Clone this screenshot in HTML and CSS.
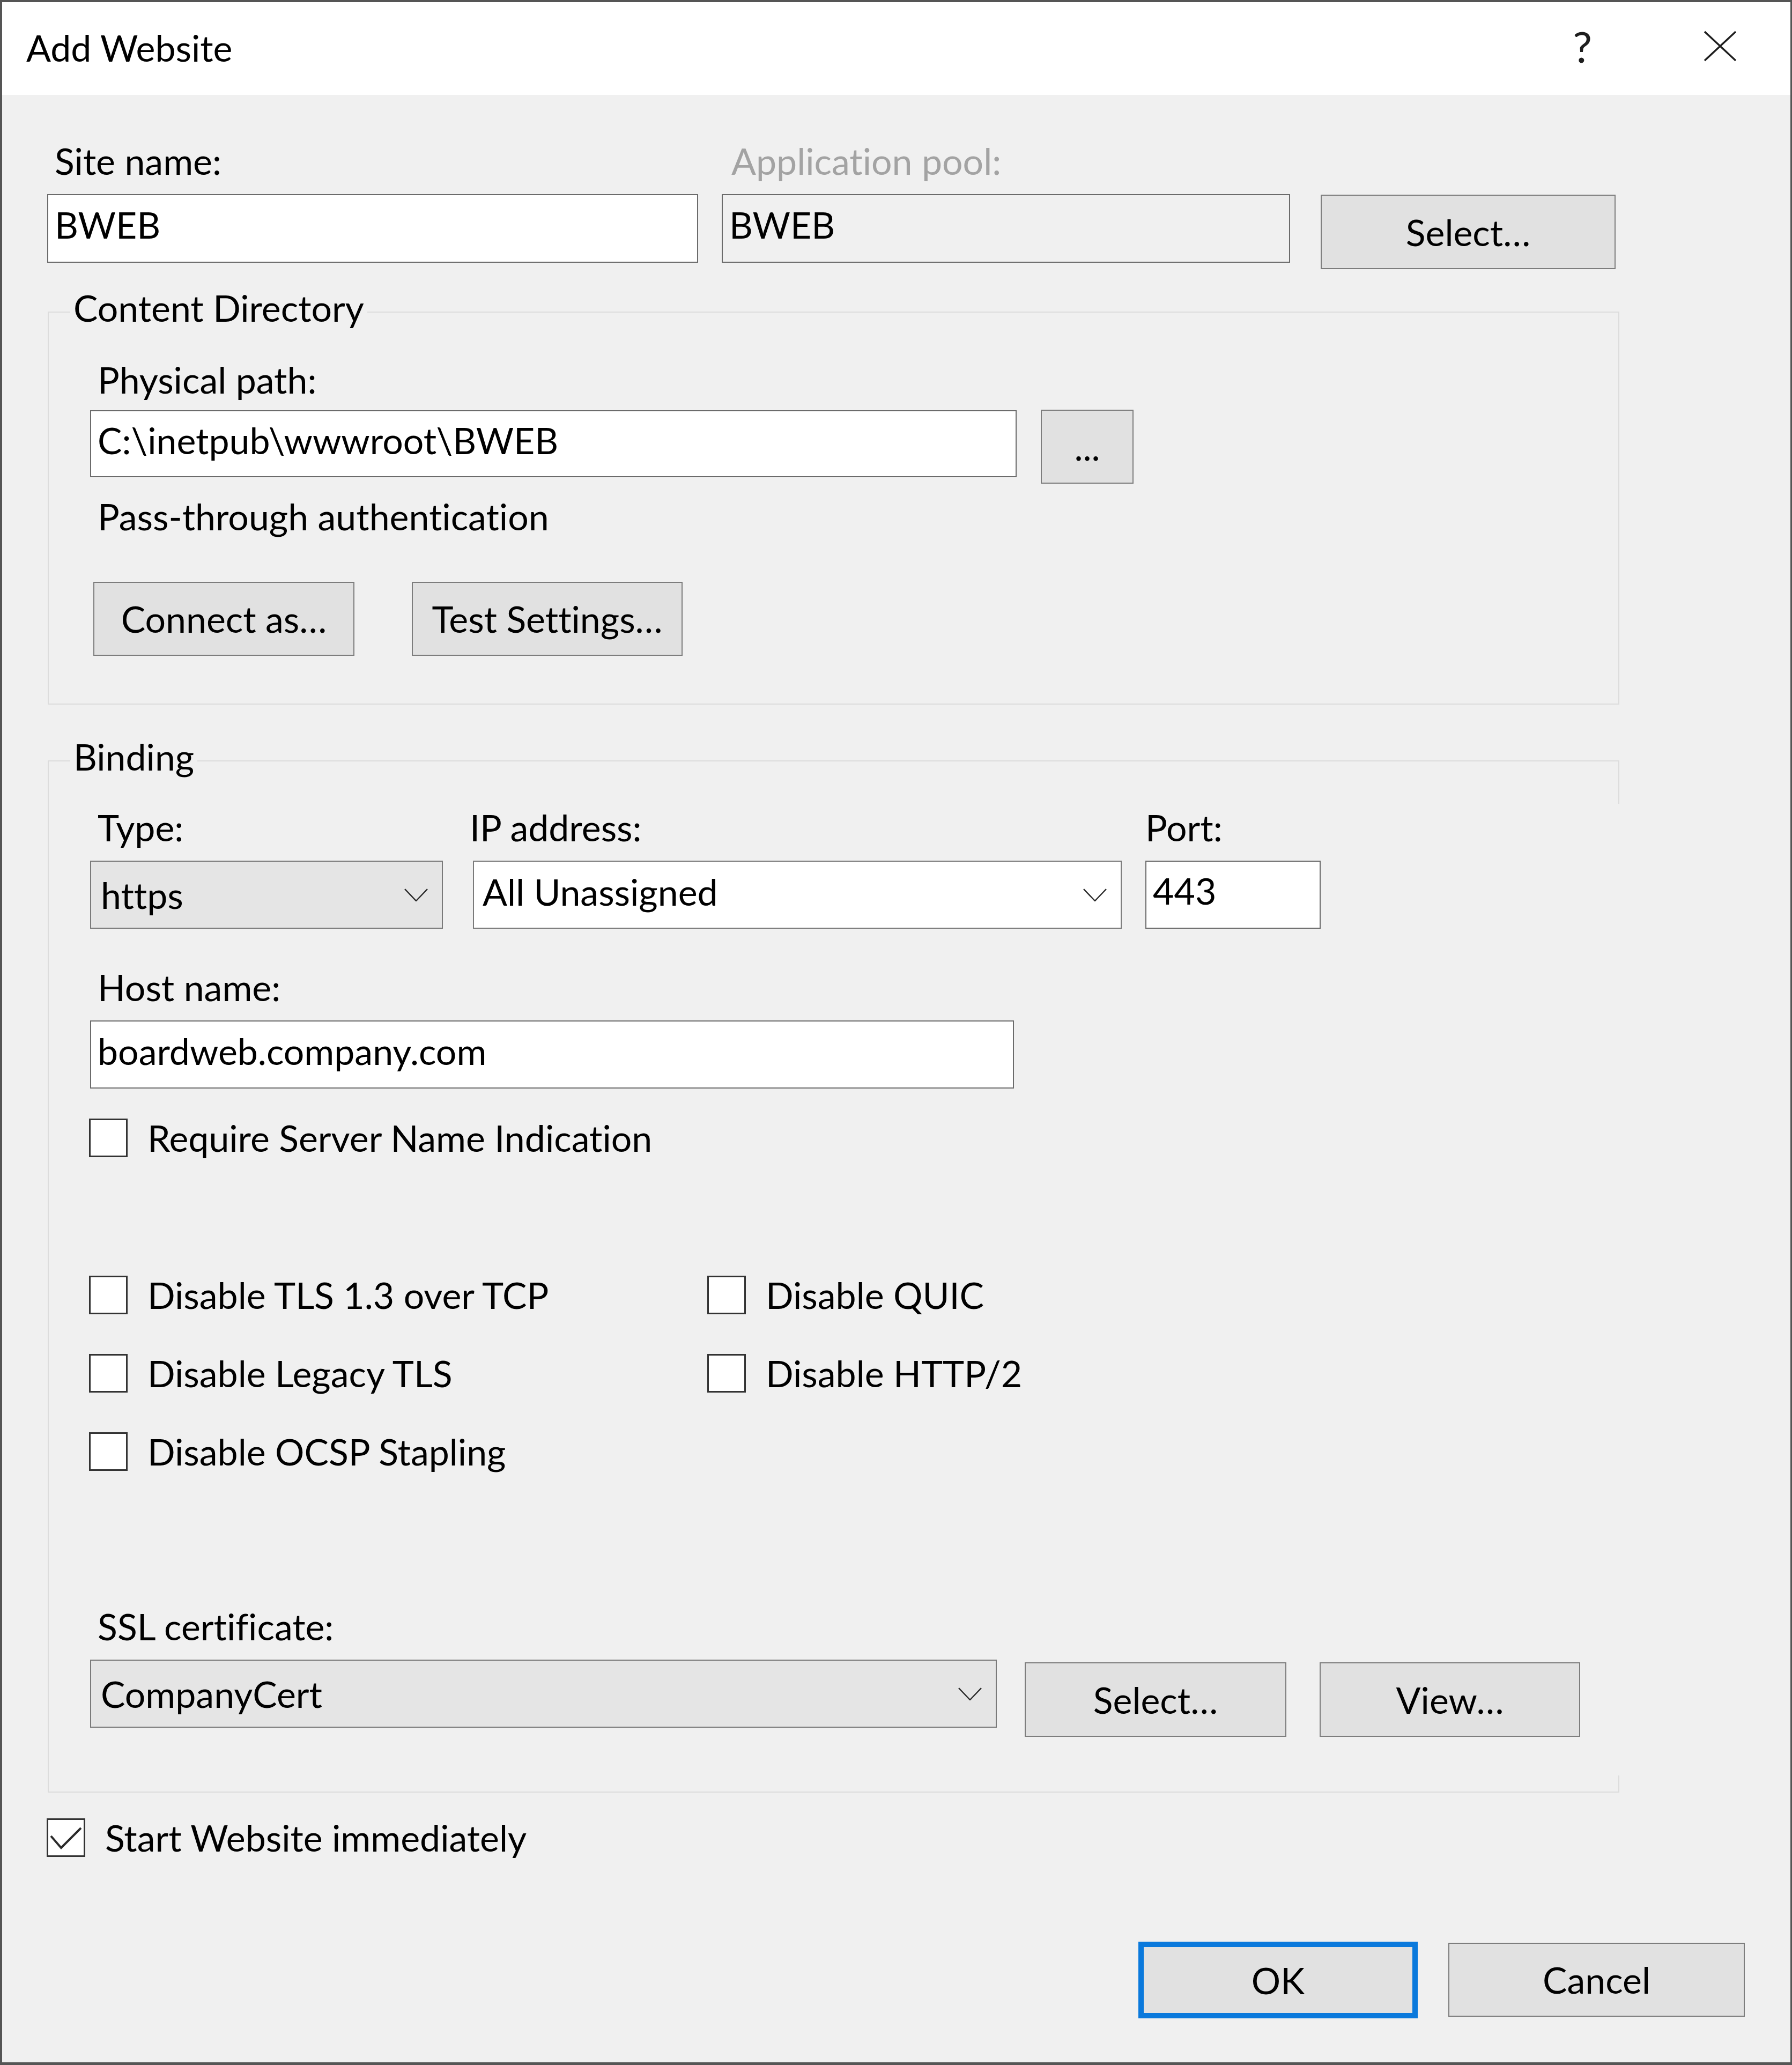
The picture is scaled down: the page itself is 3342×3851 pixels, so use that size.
FILE: index.html
```html
<!DOCTYPE html>
<html lang="en">
<head>
    <meta charset="UTF-8">
    <title>Add Website</title>
    <link rel="stylesheet" href="styles.css">
</head>
<body>
    <div class="window">
        <div class="titlebar">
            <div class="title">Add Website</div>
            <div class="help">?</div>
            <div class="close">
                <svg width="62" height="58" viewBox="0 0 62 58">
                    <path d="M2 2 L60 56 M60 2 L2 56" stroke="#1e1e1e" stroke-width="3.5" fill="none"/>
                </svg>
            </div>
        </div>

        <div class="content">
            <div class="top-row">
                <div class="field site-name">
                    <div class="label">Site name:</div>
                    <div class="textbox">BWEB</div>
                </div>
                <div class="field app-pool">
                    <div class="label disabled">Application pool:</div>
                    <div class="textbox readonly">BWEB</div>
                </div>
                <button class="btn pool-select">Select…</button>
            </div>

            <div class="group content-dir">
                <div class="group-title">Content Directory</div>
                <div class="label path-label">Physical path:</div>
                <div class="path-row">
                    <div class="textbox path-box">C:\inetpub\wwwroot\BWEB</div>
                    <button class="btn browse">...</button>
                </div>
                <div class="label auth-label">Pass-through authentication</div>
                <div class="auth-buttons">
                    <button class="btn connect">Connect as…</button>
                    <button class="btn test">Test Settings…</button>
                </div>
            </div>

            <div class="group binding">
                <div class="group-title">Binding</div>
                <div class="binding-fields">
                    <div class="field type-field">
                        <div class="label">Type:</div>
                        <div class="combo">
                            <span class="value">https</span>
                            <svg class="chevron" width="44" height="24" viewBox="0 0 44 24">
                                <path d="M1 1 L22 23 L43 1" stroke="#2a2a2a" stroke-width="2.5" fill="none"/>
                            </svg>
                        </div>
                    </div>
                    <div class="field ip-field">
                        <div class="label">IP address:</div>
                        <div class="combo white">
                            <span class="value">All Unassigned</span>
                            <svg class="chevron" width="44" height="24" viewBox="0 0 44 24">
                                <path d="M1 1 L22 23 L43 1" stroke="#2a2a2a" stroke-width="2.5" fill="none"/>
                            </svg>
                        </div>
                    </div>
                    <div class="field port-field">
                        <div class="label">Port:</div>
                        <div class="textbox">443</div>
                    </div>
                </div>

                <div class="label host-label">Host name:</div>
                <div class="textbox host-box">boardweb.company.com</div>

                <div class="check-row sni">
                    <span class="check"></span>
                    <span class="check-text">Require Server Name Indication</span>
                </div>

                <div class="tls-grid">
                    <div class="check-row">
                        <span class="check"></span>
                        <span class="check-text">Disable TLS 1.3 over TCP</span>
                    </div>
                    <div class="check-row">
                        <span class="check"></span>
                        <span class="check-text">Disable QUIC</span>
                    </div>
                    <div class="check-row">
                        <span class="check"></span>
                        <span class="check-text">Disable Legacy TLS</span>
                    </div>
                    <div class="check-row">
                        <span class="check"></span>
                        <span class="check-text">Disable HTTP/2</span>
                    </div>
                    <div class="check-row">
                        <span class="check"></span>
                        <span class="check-text">Disable OCSP Stapling</span>
                    </div>
                </div>

                <div class="label ssl-label">SSL certificate:</div>
                <div class="ssl-row">
                    <div class="combo cert-combo">
                        <span class="value">CompanyCert</span>
                        <svg class="chevron" width="44" height="24" viewBox="0 0 44 24">
                            <path d="M1 1 L22 23 L43 1" stroke="#2a2a2a" stroke-width="2.5" fill="none"/>
                        </svg>
                    </div>
                    <button class="btn cert-select">Select…</button>
                    <button class="btn cert-view">View…</button>
                </div>
            </div>

            <div class="check-row start-row">
                <span class="check">
                    <svg width="66" height="66" viewBox="0 0 66 66">
                        <path d="M5 30 L24 52 L61 15" stroke="#2a2a2a" stroke-width="4" fill="none"/>
                    </svg>
                </span>
                <span class="check-text">Start Website immediately</span>
            </div>

            <div class="footer">
                <button class="btn ok">OK</button>
                <button class="btn cancel">Cancel</button>
            </div>
        </div>
    </div>
</body>
</html>
```

FILE: styles.css
```css
* {
    margin: 0;
    padding: 0;
    box-sizing: border-box;
}

body {
    font-family: Lato, "Open Sans", sans-serif;
    font-size: 68px;
    line-height: 80px;
    font-variant-ligatures: none;
    color: #000;
    background: #f0f0f0;
}

.window {
    width: 3342px;
    height: 3851px;
    border: 4px solid #555;
    border-right-width: 3px;
    border-bottom-width: 5px;
    background: #f0f0f0;
}

/* title bar */
.titlebar {
    height: 173px;
    background: #fff;
    display: flex;
    align-items: center;
    padding-left: 45px;
}

.title {
    flex: 1;
    margin-bottom: 4px;
}

.help {
    font-size: 80px;
    line-height: 80px;
    margin-right: 208px;
    margin-bottom: 9px;
    color: #1e1e1e;
}

.close {
    width: 62px;
    height: 58px;
    margin-right: 100px;
    margin-bottom: 9px;
}

.close svg {
    display: block;
}

.content {
    padding: 83px 0 0 84px;
}

/* common controls */
.label {
    height: 80px;
    padding-left: 14px;
    white-space: nowrap;
}

.label.disabled {
    color: #a3a3a3;
    padding-left: 18px;
}

.textbox {
    height: 128px;
    border: 2px solid #6b6b6b;
    background: #fff;
    padding: 15px 0 0 12px;
    white-space: nowrap;
}

.textbox.readonly {
    background: #f0f0f0;
}

.field .textbox,
.field .combo {
    margin-top: 22px;
}

.btn {
    font: inherit;
    line-height: 80px;
    color: #000;
    background: #e1e1e1;
    border: 2px solid #7d7d7d;
    text-align: center;
    padding: 0;
    flex: none;
}

.combo {
    height: 127px;
    border: 2px solid #7a7a7a;
    background: #e5e5e5;
    display: flex;
    align-items: center;
    justify-content: space-between;
    padding: 0 26px 0 18px;
    white-space: nowrap;
}

.combo.white {
    background: #fff;
}

.combo.white .value {
    margin-bottom: 12px;
}

.chevron {
    display: block;
    flex: none;
}

.check-row {
    display: flex;
    align-items: center;
    line-height: 72px;
    white-space: nowrap;
}

.check {
    width: 72px;
    height: 72px;
    border: 3px solid #333;
    background: #fff;
    flex: none;
}

.check svg {
    display: block;
}

.check-text {
    margin-left: 37px;
}

/* top row */
.top-row {
    display: flex;
    align-items: flex-start;
}

.site-name {
    width: 1214px;
}

.app-pool {
    width: 1060px;
    margin-left: 44px;
}

.pool-select {
    width: 550px;
    height: 139px;
    margin: 103px 0 0 57px;
}

/* group boxes */
.group {
    border: 2px solid #dcdcdc;
    margin-left: 1px;
    width: 2931px;
    padding-left: 77px;
    position: relative;
}

.group-title {
    display: table;
    margin: -49px 0 0 -37px;
    padding: 0 6px 16px;
    background: #f0f0f0;
}

.content-dir {
    margin-top: 79px;
    padding-bottom: 89px;
}

.path-label {
    margin-top: 38px;
}

.path-row {
    display: flex;
    align-items: flex-start;
    margin-top: 16px;
}

.path-box {
    width: 1728px;
    height: 125px;
    margin-top: 1px;
    padding-top: 14px;
}

.browse {
    width: 173px;
    height: 138px;
    margin-left: 45px;
}

.auth-label {
    margin-top: 21px;
}

.auth-buttons {
    display: flex;
    margin-top: 82px;
}

.connect {
    width: 487px;
    height: 138px;
    margin-left: 6px;
}

.test {
    width: 505px;
    height: 138px;
    margin-left: 107px;
}

/* binding */
.binding {
    margin-top: 104px;
    padding-bottom: 102px;
    border-right-color: transparent;
}

.binding::before,
.binding::after {
    content: "";
    position: absolute;
    right: -2px;
    width: 2px;
    background: #dcdcdc;
}

.binding::before {
    top: -2px;
    height: 81px;
}

.binding::after {
    bottom: -2px;
    height: 32px;
}

.binding-fields {
    display: flex;
    align-items: flex-start;
    margin-top: 36px;
}

.type-field {
    width: 658px;
}

.ip-field {
    width: 1210px;
    margin-left: 56px;
}

.ip-field .label {
    padding-left: 0;
    margin-left: -6px;
}

.ip-field .combo {
    padding-left: 16px;
}

.port-field {
    width: 327px;
    margin-left: 44px;
}

.port-field .label {
    padding-left: 0;
}

.port-field .textbox {
    height: 127px;
    padding-top: 14px;
}

.host-label {
    margin-top: 69px;
}

.host-box {
    width: 1723px;
    height: 127px;
    margin-top: 22px;
}

.sni {
    margin-top: 56px;
    margin-left: -2px;
}

.tls-grid {
    display: grid;
    grid-template-columns: 1153px auto;
    row-gap: 74px;
    margin-top: 221px;
    margin-left: -2px;
}

.ssl-label {
    margin-top: 250px;
}

.ssl-row {
    display: flex;
    align-items: flex-start;
    margin-top: 22px;
}

.cert-combo {
    width: 1691px;
}

.cert-select {
    width: 488px;
    height: 139px;
    margin: 5px 0 0 52px;
}

.cert-view {
    width: 486px;
    height: 139px;
    margin: 5px 0 0 62px;
}

/* bottom */
.start-row {
    margin-top: 48px;
    margin-left: -1px;
}

.footer {
    display: flex;
    align-items: flex-start;
    justify-content: flex-end;
    margin-top: 158px;
    padding-right: 85px;
}

.ok {
    width: 521px;
    height: 143px;
    border: 10px solid #0a79dc;
}

.cancel {
    width: 553px;
    height: 138px;
    margin: 2px 0 0 57px;
}
```
